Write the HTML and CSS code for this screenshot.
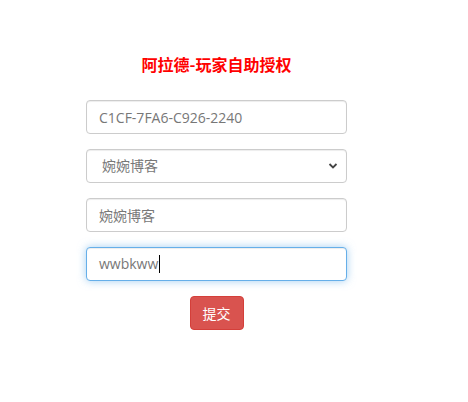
FILE: index.html
```html
<!DOCTYPE html>
<html lang="zh">
<head>
<meta charset="utf-8">
<title>阿拉德-玩家自助授权</title>
<link rel="stylesheet" href="styles.css">
</head>
<body>
<div class="page">
  <h3 class="title">阿拉德-玩家自助授权</h3>
  <form class="form">
    <input class="form-control" type="text" value="C1CF-7FA6-C926-2240">
    <div class="select-wrap">
      <select class="form-control select">
        <option>婉婉博客</option>
      </select>
      <svg class="chev" width="10" height="8" viewBox="0 0 10 8"><path d="M1.5 2 L5 5.5 L8.5 2" fill="none" stroke="#444" stroke-width="1.8"/></svg>
    </div>
    <input class="form-control" type="text" value="婉婉博客">
    <div class="form-control focus"><span>wwbkww</span><span class="caret"></span></div>
    <div class="btn-row"><button type="button" class="btn">提交</button></div>
  </form>
</div>
</body>
</html>
```

FILE: styles.css
```css
* { box-sizing: border-box; }
html, body { margin: 0; padding: 0; background: #fff; }
body {
  font-family: "Open Sans", "Noto Sans CJK SC", sans-serif;
  font-size: 14px;
  color: #333;
  width: 468px;
  height: 402px;
  overflow: hidden;
}
.page {
  width: 433px;
  display: flex;
  flex-direction: column;
  align-items: center;
  padding-top: 53px;
}
.title {
  margin: 0;
  font-family: "Noto Sans CJK SC", sans-serif;
  font-size: 16px;
  font-weight: bold;
  line-height: 22px;
  color: #f00;
}
.form {
  width: 261px;
  margin-top: 25px;
  display: flex;
  flex-direction: column;
  gap: 15px;
}
.form-control {
  display: block;
  width: 100%;
  height: 34px;
  padding: 6px 12px;
  font-family: "Open Sans", "Noto Sans CJK SC", sans-serif;
  font-size: 14px;
  line-height: 20px;
  color: #777;
  background: #fff;
  border: 1px solid #ccc;
  border-radius: 4px;
  box-shadow: inset 0 1px 1px rgba(0,0,0,.075);
  outline: none;
  margin: 0;
}
.select-wrap { position: relative; }
.select {
  -webkit-appearance: none;
  appearance: none;
  padding-left: 15px;
}
.chev { position: absolute; right: 9px; top: 13px; }
.focus {
  display: flex;
  align-items: center;
  border-color: #66afe9;
  box-shadow: inset 0 1px 1px rgba(0,0,0,.075), 0 0 8px rgba(102,175,233,.6);
}
.caret {
  display: inline-block;
  width: 1px;
  height: 18px;
  background: #000;
  margin-left: 1px;
}
.btn-row { display: flex; justify-content: center; }
.btn {
  height: 34px;
  padding: 6px 12px;
  font-family: "Noto Sans CJK SC", sans-serif;
  font-size: 14px;
  line-height: 20px;
  color: #fff;
  background: #d9534f;
  border: 1px solid #d43f3a;
  border-radius: 4px;
  margin: 0;
}
```
